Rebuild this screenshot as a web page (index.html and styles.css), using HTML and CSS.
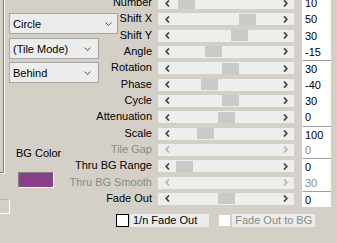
FILE: index.html
```html
<!DOCTYPE html>
<html>
<head>
<meta charset="utf-8">
<title>Tile settings</title>
<link rel="stylesheet" href="styles.css">
</head>
<body>
<div class="panel">
  <div class="left">
    <div class="left-top">
      <div class="group-edge"></div>
      <div class="controls">
        <div class="combo wide"><span>Circle</span><svg class="caret" width="7" height="4" viewBox="0 0 7 4"><path d="M0.5 0.5 L3.5 3.5 L6.5 0.5" fill="none" stroke="#555" stroke-width="1"/></svg></div>
        <div class="combo gap1"><span>(Tile Mode)</span><svg class="caret" width="7" height="4" viewBox="0 0 7 4"><path d="M0.5 0.5 L3.5 3.5 L6.5 0.5" fill="none" stroke="#555" stroke-width="1"/></svg></div>
        <div class="combo gap2"><span>Behind</span><svg class="caret" width="7" height="4" viewBox="0 0 7 4"><path d="M0.5 0.5 L3.5 3.5 L6.5 0.5" fill="none" stroke="#555" stroke-width="1"/></svg></div>
        <div class="bg-label">BG Color</div>
        <div class="swatch"></div>
      </div>
    </div>
    <div class="stub"></div>
  </div>

  <div class="form">
    <div class="label">Number</div>
    <div class="slider"><svg class="arr" viewBox="0 0 5 7"><path d="M4 0.5 L1.2 3.5 L4 6.5" /></svg><div class="track"><div class="thumb" style="margin-left:4px"></div></div><svg class="arr" viewBox="0 0 5 7"><path d="M1 0.5 L3.8 3.5 L1 6.5" /></svg></div>
    <div class="value">10</div>

    <div class="label">Shift X</div>
    <div class="slider"><svg class="arr" viewBox="0 0 5 7"><path d="M4 0.5 L1.2 3.5 L4 6.5" /></svg><div class="track"><div class="thumb" style="margin-left:65px"></div></div><svg class="arr" viewBox="0 0 5 7"><path d="M1 0.5 L3.8 3.5 L1 6.5" /></svg></div>
    <div class="value">50</div>

    <div class="label">Shift Y</div>
    <div class="slider"><svg class="arr" viewBox="0 0 5 7"><path d="M4 0.5 L1.2 3.5 L4 6.5" /></svg><div class="track"><div class="thumb" style="margin-left:57px"></div></div><svg class="arr" viewBox="0 0 5 7"><path d="M1 0.5 L3.8 3.5 L1 6.5" /></svg></div>
    <div class="value">30</div>

    <div class="label">Angle</div>
    <div class="slider"><svg class="arr" viewBox="0 0 5 7"><path d="M4 0.5 L1.2 3.5 L4 6.5" /></svg><div class="track"><div class="thumb" style="margin-left:31px"></div></div><svg class="arr" viewBox="0 0 5 7"><path d="M1 0.5 L3.8 3.5 L1 6.5" /></svg></div>
    <div class="value">-15</div>

    <div class="label">Rotation</div>
    <div class="slider"><svg class="arr" viewBox="0 0 5 7"><path d="M4 0.5 L1.2 3.5 L4 6.5" /></svg><div class="track"><div class="thumb" style="margin-left:48px"></div></div><svg class="arr" viewBox="0 0 5 7"><path d="M1 0.5 L3.8 3.5 L1 6.5" /></svg></div>
    <div class="value mark">30</div>

    <div class="label">Phase</div>
    <div class="slider"><svg class="arr" viewBox="0 0 5 7"><path d="M4 0.5 L1.2 3.5 L4 6.5" /></svg><div class="track"><div class="thumb" style="margin-left:27px"></div></div><svg class="arr" viewBox="0 0 5 7"><path d="M1 0.5 L3.8 3.5 L1 6.5" /></svg></div>
    <div class="value">-40</div>

    <div class="label">Cycle</div>
    <div class="slider"><svg class="arr" viewBox="0 0 5 7"><path d="M4 0.5 L1.2 3.5 L4 6.5" /></svg><div class="track"><div class="thumb" style="margin-left:48px"></div></div><svg class="arr" viewBox="0 0 5 7"><path d="M1 0.5 L3.8 3.5 L1 6.5" /></svg></div>
    <div class="value">30</div>

    <div class="label">Attenuation</div>
    <div class="slider"><svg class="arr" viewBox="0 0 5 7"><path d="M4 0.5 L1.2 3.5 L4 6.5" /></svg><div class="track"><div class="thumb" style="margin-left:44px"></div></div><svg class="arr" viewBox="0 0 5 7"><path d="M1 0.5 L3.8 3.5 L1 6.5" /></svg></div>
    <div class="value">0</div>

    <div class="label">Scale</div>
    <div class="slider"><svg class="arr" viewBox="0 0 5 7"><path d="M4 0.5 L1.2 3.5 L4 6.5" /></svg><div class="track"><div class="thumb" style="margin-left:23px"></div></div><svg class="arr" viewBox="0 0 5 7"><path d="M1 0.5 L3.8 3.5 L1 6.5" /></svg></div>
    <div class="value mark">100</div>

    <div class="label off">Tile Gap</div>
    <div class="slider off"><svg class="arr" viewBox="0 0 5 7"><path d="M4 0.5 L1.2 3.5 L4 6.5" /></svg><div class="track"></div><svg class="arr" viewBox="0 0 5 7"><path d="M1 0.5 L3.8 3.5 L1 6.5" /></svg></div>
    <div class="value off">0</div>

    <div class="label">Thru BG Range</div>
    <div class="slider"><svg class="arr" viewBox="0 0 5 7"><path d="M4 0.5 L1.2 3.5 L4 6.5" /></svg><div class="track"><div class="thumb" style="margin-left:2px"></div></div><svg class="arr" viewBox="0 0 5 7"><path d="M1 0.5 L3.8 3.5 L1 6.5" /></svg></div>
    <div class="value mark">0</div>

    <div class="label off">Thru BG Smooth</div>
    <div class="slider off"><svg class="arr" viewBox="0 0 5 7"><path d="M4 0.5 L1.2 3.5 L4 6.5" /></svg><div class="track"></div><svg class="arr" viewBox="0 0 5 7"><path d="M1 0.5 L3.8 3.5 L1 6.5" /></svg></div>
    <div class="value off">30</div>

    <div class="label">Fade Out</div>
    <div class="slider"><svg class="arr" viewBox="0 0 5 7"><path d="M4 0.5 L1.2 3.5 L4 6.5" /></svg><div class="track"><div class="thumb" style="margin-left:44px"></div></div><svg class="arr" viewBox="0 0 5 7"><path d="M1 0.5 L3.8 3.5 L1 6.5" /></svg></div>
    <div class="value mark">0</div>

    <div class="checks">
      <div class="check"><span class="box"></span><span class="ctext">1/n Fade Out</span></div>
      <div class="check off"><span class="box"></span><span class="ctext">Fade Out to BG</span></div>
    </div>
  </div>
</div>
</body>
</html>
```
FILE: styles.css
```css
html, body {
  margin: 0;
  padding: 0;
  width: 337px;
  height: 243px;
  overflow: hidden;
  background: #d4d0c8;
  font-family: "Liberation Sans", Arial, sans-serif;
  font-size: 11px;
  color: #000;
}

.panel {
  display: grid;
  margin-top: -5px;
}

.left, .form {
  grid-area: 1 / 1;
}

.left {
  display: flex;
  flex-direction: column;
  align-self: start;
  justify-self: start;
}

.left-top {
  display: flex;
  align-items: flex-start;
}

.group-edge {
  width: 3px;
  height: 177px;
  border-right: 1px solid #808080;
  border-bottom: 1px solid #808080;
  box-shadow: 1px 1px 0 #ffffff;
}

.controls {
  display: flex;
  flex-direction: column;
  align-items: flex-start;
  margin-left: 5px;
  padding-top: 18px;
}

.combo {
  box-sizing: border-box;
  width: 90px;
  height: 21px;
  background: #ececec;
  border: 1px solid #a6a6a6;
  display: flex;
  align-items: center;
  justify-content: space-between;
  padding: 0 7px 0 3px;
}

.combo.wide {
  width: 109px;
  padding-right: 5px;
}

.combo.gap1 { margin-top: 4px; }
.combo.gap2 { margin-top: 3px; }

.caret { display: block; }

.bg-label {
  margin-top: 64px;
  margin-left: 7px;
  line-height: 13px;
}

.swatch {
  box-sizing: border-box;
  margin-top: 12px;
  margin-left: 9px;
  width: 36px;
  height: 16px;
  background: #88408a;
  border: 1px solid;
  border-color: #808080 #ffffff #ffffff #808080;
}

.stub {
  box-sizing: border-box;
  margin-top: 11px;
  width: 10px;
  height: 15px;
  border-top: 1px solid #b8b4ac;
  border-right: 1px solid #ffffff;
  border-bottom: 1px solid #ffffff;
}

.form {
  display: grid;
  grid-template-columns: 158px 144px 29px;
  grid-template-rows: repeat(13, 16.333px) auto;
  align-self: start;
}

.label {
  text-align: right;
  padding-right: 6px;
  margin-top: 1px;
  line-height: 12px;
  white-space: nowrap;
}

.off { color: #8a8a8a; }

.slider {
  margin-top: 2px;
  width: 136px;
  height: 12px;
  background: #eeeeee;
  display: flex;
  align-items: center;
  padding: 0 6px 0 7px;
  box-sizing: border-box;
}

.arr {
  width: 5px;
  height: 7px;
  flex: none;
}

.arr path {
  fill: none;
  stroke: #444;
  stroke-width: 1.7;
}

.slider.off .arr path { stroke: #b4b4b4; }

.track {
  flex: 1;
  height: 12px;
  margin: 0 4px;
  display: flex;
  align-items: center;
}

.thumb {
  width: 17px;
  height: 11px;
  background: #c9c9c9;
}

.value {
  background: #ffffff;
  padding-left: 2px;
  line-height: 16px;
  border-left: 1px solid #ffffff;
}

.value.mark {
  border-top: 1px solid #a0a0a0;
}

.checks {
  grid-column: 1 / -1;
  display: flex;
  margin-top: 7px;
  padding-left: 116px;
}

.check {
  display: flex;
  align-items: center;
}

.check + .check { margin-left: 9px; }

.box {
  box-sizing: border-box;
  width: 13px;
  height: 13px;
  background: #ffffff;
  border: 1px solid #000;
}

.check.off .box { border-color: #d4d0c8; }

.ctext {
  margin-left: 1px;
  background: #ececec;
  height: 13px;
  line-height: 13px;
  padding: 0 12px 0 3px;
}

.check.off .ctext { padding-right: 3px; }
```
